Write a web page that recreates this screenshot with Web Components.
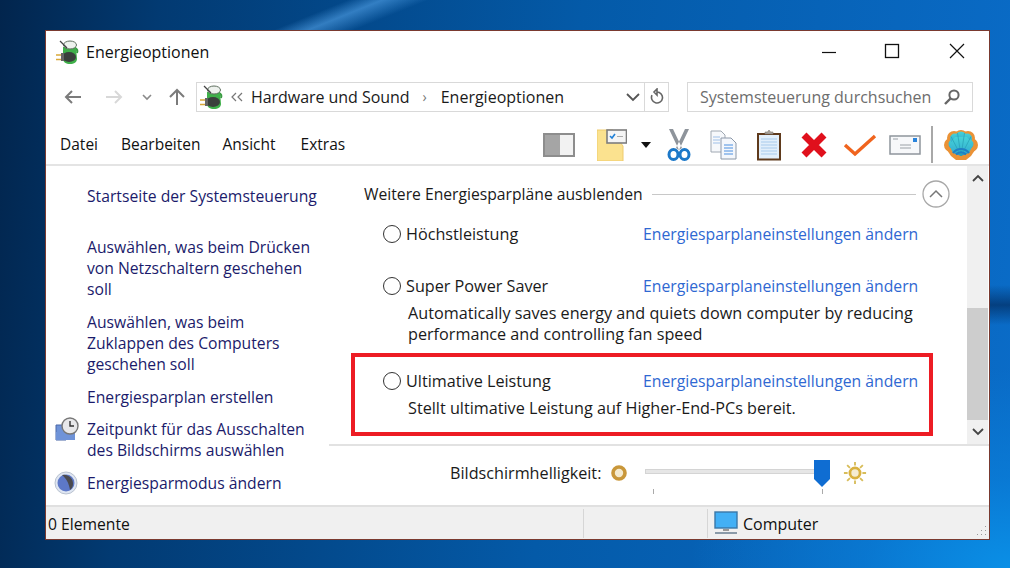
<!DOCTYPE html>
<html><head><meta charset="utf-8"><style>
html,body{margin:0;padding:0;height:568px;overflow:hidden}
body{width:1010px;height:568px;font-family:"Open Sans","Noto Sans",sans-serif;background:
linear-gradient(158deg,transparent 0 30%,rgba(90,170,240,.55) 33%,transparent 37%) no-repeat 0 0/1010px 60px,
linear-gradient(to bottom,transparent 0,rgba(2,40,90,.65) 50%,transparent 100%) no-repeat 990px 285px/20px 40px,
radial-gradient(ellipse 320px 200px at 1010px 568px,#0a8fe6 0,rgba(10,130,220,.6) 45%,transparent 100%),
linear-gradient(95deg,#02254d 0,#023a72 15%,#045aa8 55%,#0a6cc8 100%);}
win-dow{margin:30px 20px 0 45px}
</style></head><body>
<win-dow>
<title-bar></title-bar>
<nav-bar></nav-bar>
<menu-bar></menu-bar>
<main-area></main-area>
<status-bar></status-bar>
</win-dow>
<script>
const plug=(s)=>`<svg width="${s}" height="${s}" viewBox="0 0 24 24"><path d="M19 8a4 4 0 0 1 2 5" fill="none" stroke="#3a9a42" stroke-width="2"/><path d="M7 7h13l1 12c0 3-3 5-7 5s-7-2-7-5z" fill="#3fb04a"/><ellipse cx="14" cy="5" rx="6.500" ry="4" fill="#eef2ee" stroke="#5f6f5f"/><path d="M4 1l7 7" stroke="#444" stroke-width="1.300"/><ellipse cx="13" cy="17" rx="7" ry="5" fill="#3a403c"/><path d="M0 15h6M0 19.500h6" stroke="#d9a93a" stroke-width="1.700"/><rect x="5" y="13" width="3" height="8" fill="#666"/></svg>`;
function def(name,html){customElements.define(name,class extends HTMLElement{constructor(){super();this.attachShadow({mode:'open'}).innerHTML=html}})}
def('win-dow',`<style>:host{display:flex;flex-direction:column;width:945px;height:510px;background:#fff;box-sizing:border-box;border:1px solid #7a3a30;color:#111;font-size:16px;position:relative}</style><slot></slot>`);
def('title-bar',`<style>:host{display:flex;align-items:center;height:42px;flex:none;padding-left:10px;font-size:16px;position:relative}
span{margin-left:6px;flex:1}
.w{display:flex;align-items:center;margin-right:24px;margin-top:-2px}
.w svg{display:block}</style>
${plug(24)}<span>Energieoptionen</span>
<div class="w">
<svg width="14" height="16" viewBox="0 0 14 16"><path d="M0 9.500h14" stroke="#111" stroke-width="1.200"/></svg>
<svg style="margin-left:48px" width="16" height="16" viewBox="0 0 16 16"><rect x="1.500" y="1.500" width="13" height="13" fill="none" stroke="#111" stroke-width="1.300"/></svg>
<svg style="margin-left:49px" width="16" height="16" viewBox="0 0 16 16"><path d="M1 1l14 14M15 1L1 15" stroke="#111" stroke-width="1.200"/></svg>
</div>`);
def('nav-bar',`<style>:host{display:flex;align-items:center;height:35px;margin-top:6px;flex:none;padding-left:17px}
svg{display:block;flex:none}
.box{display:flex;align-items:center;box-sizing:border-box;height:30px;width:473px;margin-left:9px;border:1px solid #d9d9d9;padding-left:3px;font-size:16px;color:#1a1a1a}
.a{color:#777;font-size:14px;margin:0 14px 0 13px}
.sp{flex:1}
.v{border-left:1px solid #d9d9d9;height:28px;width:23px;display:flex;align-items:center;justify-content:center;flex:none}
.s{display:flex;align-items:center;box-sizing:border-box;width:286px;height:30px;margin-left:18px;border:1px solid #d9d9d9;padding-left:12px;color:#6d6d6d;font-size:16px}
.s span{flex:1;white-space:nowrap}.s svg{margin-right:11px}</style>
<svg width="20" height="18" viewBox="0 0 20 18"><path d="M18 9H3M9 3L3 9l6 6" fill="none" stroke="#7b7b7b" stroke-width="2"/></svg>
<svg style="margin-left:21px" width="20" height="18" viewBox="0 0 20 18"><path d="M2 9h15M11 3l6 6-6 6" fill="none" stroke="#d8d8d8" stroke-width="2"/></svg>
<svg style="margin-left:18px" width="10" height="18" viewBox="0 0 10 18"><path d="M1 7l4 4 4-4" fill="none" stroke="#8a8a8a" stroke-width="1.600"/></svg>
<svg style="margin-left:15px" width="20" height="20" viewBox="0 0 20 20"><path d="M10 18V3M3 10l7-7 7 7" fill="none" stroke="#7b7b7b" stroke-width="2"/></svg>
<div class="box">${plug(24)}
<svg style="margin-left:7px" width="12" height="10" viewBox="0 0 12 10"><path d="M5 1L1 5l4 4M11 1L7 5l4 4" fill="none" stroke="#777" stroke-width="1.200"/></svg><span style="margin-left:8px;letter-spacing:-.05px">Hardware und Sound</span><span class="a">›</span><span>Energieoptionen</span><span class="sp"></span>
<svg style="margin-right:3px" width="16" height="16" viewBox="0 0 16 16"><path d="M2 5l6 6 6-6" fill="none" stroke="#555" stroke-width="1.800"/></svg>
<div class="v"><svg width="18" height="18" viewBox="0 0 18 18"><path d="M9 4a5.500 5.500 0 1 1-5 3.200M9 1v6L6 4z" fill="none" stroke="#666" stroke-width="1.600"/></svg></div></div>
<div class="s"><span>Systemsteuerung durchsuchen</span><svg width="18" height="18" viewBox="0 0 18 18"><circle cx="11" cy="7" r="4.600" fill="none" stroke="#666" stroke-width="2"/><path d="M7.500 10.500L2 16" stroke="#666" stroke-width="2.400"/></svg></div>`);
def('menu-bar',`<style>:host{display:flex;align-items:center;height:52px;flex:none;padding:11px 11px 0 14px;border-bottom:2px solid #e4e4e4;box-sizing:border-box;font-size:15.500px;position:relative}
span{margin-right:23px;margin-top:-2px}
i{flex:1}svg{display:block;flex:none}</style>
<span>Datei</span><span style="margin-right:22px">Bearbeiten</span><span style="margin-right:25px">Ansicht</span><span>Extras</span><i></i>
<svg width="32" height="24" viewBox="0 0 32 24"><rect x="1" y="1" width="30" height="22" fill="#f2f2f2" stroke="#8d8d8d" stroke-width="2"/><rect x="2" y="2" width="15" height="20" fill="#a5a5a5"/></svg>
<svg style="margin-left:22px" width="30" height="32" viewBox="0 0 30 32"><path d="M0 1h16v12h7l3 4v15H0z" fill="#fbe28f" stroke="#eecb6c"/><rect x="10" y="1" width="19.500" height="13" fill="#f4f4f4" stroke="#7d7d7d" stroke-width="1.600"/><path d="M13 7l2 2 3-4" stroke="#1f7fd6" stroke-width="1.600" fill="none"/><path d="M20 7.500h6" stroke="#aaa"/></svg>
<svg style="margin-left:13px" width="12" height="8" viewBox="0 0 12 8"><path d="M1 1h10L6 7z" fill="#111"/></svg>
<svg style="margin-left:15px" width="24" height="32" viewBox="0 0 24 32"><path d="M2 0l4 0 9 19-3 2zM22 0l-4 0-9 19 3 2z" fill="#8e949b"/><ellipse cx="6.500" cy="25.500" rx="4.500" ry="5" fill="none" stroke="#1c78c8" stroke-width="3"/><ellipse cx="17.500" cy="25.500" rx="4.500" ry="5" fill="none" stroke="#1c78c8" stroke-width="3"/></svg>
<svg style="margin-left:19px" width="27" height="30" viewBox="0 0 27 30"><path d="M1 1h10l4 4v17H1z" fill="#f6f8fb" stroke="#a0a8b2"/><path d="M11 8h10l5 5v16H11z" fill="#f4f7fc" stroke="#8c98a8"/><path d="M14 15h9M14 18h9M14 21h9M14 24h9" stroke="#4a8fe0"/><path d="M3 7h7M3 10h7M3 13h7" stroke="#9fc0e8"/></svg>
<svg style="margin-left:19px" width="26" height="32" viewBox="0 0 26 32"><rect x="1" y="4" width="24" height="27.500" fill="#5f3a1c"/><rect x="3" y="6" width="20" height="23.500" fill="#e2effb"/><path d="M5 10h16M5 13h16M5 16h16M5 19h16M5 22h16M5 25h16" stroke="#a9cbec"/><path d="M9 5V3h2.500L13 1l1.500 2H17v2z" fill="#a8a29a" stroke="#807a70" stroke-width=".6"/></svg>
<svg style="margin-left:18px" width="28" height="28" viewBox="0 0 28 28"><path d="M4 4l20 20M24 4L4 24" stroke="#e0101c" stroke-width="7"/></svg>
<svg style="margin-left:15px" width="34" height="24" viewBox="0 0 34 24"><path d="M2 12l10 9L32 3" fill="none" stroke="#f0641e" stroke-width="3.400"/></svg>
<svg style="margin-left:12px" width="32" height="20" viewBox="0 0 32 20"><rect x="1" y="1" width="30" height="18" fill="#f7f8fa" stroke="#8f959c" stroke-width="1.500"/><rect x="24" y="3" width="4" height="4" fill="#2a84dc"/><path d="M4 4h5M11 10h11M11 13h11" stroke="#9aa0a6"/></svg>
<div style="width:2px;height:37px;background:#a8a8a8;margin:0 11px 0 10px;flex:none"></div>
<svg width="34" height="32" viewBox="0 0 34 32"><defs><linearGradient id="sh" x1="0" y1="0" x2="0" y2="1"><stop offset="0" stop-color="#46d2d8"/><stop offset=".7" stop-color="#36b4d2"/><stop offset="1" stop-color="#2090c8"/></linearGradient></defs>
<g fill="#ea9236"><circle cx="7" cy="16" r="7"/><circle cx="10" cy="9" r="7"/><circle cx="17" cy="8" r="7"/><circle cx="24" cy="9" r="7"/><circle cx="27" cy="16" r="7"/><path d="M1 18l6 9 5 4h10l5-4 6-9z"/></g>
<g fill="url(#sh)"><circle cx="9" cy="15" r="4.500"/><circle cx="11" cy="9.500" r="5"/><circle cx="17" cy="8" r="5.500"/><circle cx="23" cy="9.500" r="5"/><circle cx="25" cy="15" r="4.500"/><path d="M5 16l6-8h12l6 8-4 8-8 3-8-3z"/></g>
<path d="M17 27L13.500 4M17 27L20.500 4M17 27L7 7.500M17 27L27 7.500" stroke="#2aa3b8" stroke-width=".8"/>
<path d="M9 24a10 10 0 0 1 16 0M12 25.500a6.500 6.500 0 0 1 10 0" fill="none" stroke="#1f7fc4" stroke-width="2"/></svg>`);
def('side-panel',`<style>:host{display:block;width:283px;flex:none;box-sizing:border-box;padding:20px 0 0 41px;color:#1b1b6b;font-size:15.700px;line-height:21px}
p{margin:0;position:relative;white-space:nowrap}
svg{position:absolute;left:-33px}</style>
<p>Startseite der Systemsteuerung</p>
<p style="margin-top:30px">Auswählen, was beim Drücken<br>von Netzschaltern geschehen<br>soll</p>
<p style="margin-top:12px">Auswählen, was beim<br>Zuklappen des Computers<br>geschehen soll</p>
<p style="margin-top:12px">Energiesparplan erstellen</p>
<p style="margin-top:11px"><svg style="top:-2px" width="26" height="26" viewBox="0 0 26 26"><path d="M2 8h10v15H2z" fill="#6f93d8" stroke="#4a68a8"/><rect x="2" y="15" width="19" height="8" fill="#6f93d8"/><circle cx="16" cy="9" r="8" fill="#e8e8ea" stroke="#777" stroke-width="1.400"/><path d="M16 4v5h4" fill="none" stroke="#333" stroke-width="1.400"/></svg>Zeitpunkt für das Ausschalten<br>des Bildschirms auswählen</p>
<p style="margin-top:12px"><svg style="top:-2px" width="24" height="24" viewBox="0 0 24 24"><circle cx="12" cy="12" r="11" fill="#dfe6f2" stroke="#b9c2cf"/><circle cx="12" cy="12" r="8.500" fill="#5d78c8"/><path d="M8 4a9 9 0 0 1 11 8 8 8 0 0 1-3 7C15 12 12 7 8 4z" fill="#4a4a50"/></svg>Energiesparmodus ändern</p>`);
def('plan-row',`<style>:host{display:block;font-size:16.200px;color:#1a1a1a;line-height:21px}
.r{display:flex;align-items:center;height:22px}
.c{box-sizing:border-box;width:18px;height:18px;border:1.500px solid #333;border-radius:50%;margin-left:54px;flex:none}
.n{margin-left:5px;width:237px;flex:none;white-space:nowrap}
.l{color:#2f68d2;white-space:nowrap;font-size:15.750px}
.d{margin:6px 0 0 79px;white-space:nowrap;font-size:16.200px}
</style><div class="r"><div class="c"></div><div class="n"><slot name="n"></slot></div><div class="l">Energiesparplaneinstellungen ändern</div></div><div class="d"><slot></slot></div>`);
def('main-area',`<style>:host{flex:1;display:flex;min-height:0;position:relative}
.m{flex:1;display:flex;flex-direction:column;min-width:0}
.top{flex:none;display:flex;border-bottom:2px solid #e2e2e2;box-sizing:border-box;height:280px}
.c{flex:1;padding-top:17px;font-size:15.700px;color:#1a1a1a;min-width:0;box-sizing:border-box}
.h{display:flex;align-items:center;height:22px;padding-left:35px}
.h span{white-space:nowrap}.h i{flex:1;height:1px;background:#c8c8c8;margin:0 6px 0 9px}
.h svg{margin-right:17px;display:block;flex:none}
.sb{width:21px;flex:none;background:#f0f0f0;display:flex;flex-direction:column;margin-right:1px}
.sb .tr{flex:1;display:flex;flex-direction:column;justify-content:flex-end}
.sb .th{height:112px;background:#cdcdcd}
.sb .ar{height:24px;display:flex;align-items:center;justify-content:center;flex:none}
.b{flex:1;display:flex;align-items:center;font-size:16.200px;padding:0 0 6px 121px;color:#1a1a1a;box-sizing:border-box}
.red{position:absolute;left:305px;top:187px;width:582px;height:83px;box-sizing:border-box;border:4px solid #ed1c24}
.slider{position:relative;width:185px;height:40px;margin-left:17px;flex:none}
.slider .t{position:absolute;left:0;top:16px;width:180px;height:5px;background:#e6e6e6;border:1px solid #d4d4d4;box-sizing:border-box}
.slider svg{position:absolute;left:169px;top:7px;display:block}
.slider .k{position:absolute;top:36px;width:1px;height:5px;background:#aaa}
.ic{display:block;flex:none}
</style>
<side-panel></side-panel>
<div class="m"><div class="top"><div class="c">
<div class="h"><span>Weitere Energiesparpläne ausblenden</span><i></i><svg width="28" height="28" viewBox="0 0 28 28"><circle cx="14" cy="14" r="13" fill="#fff" stroke="#a8a8a8" stroke-width="1.300"/><path d="M8 17l6-6 6 6" fill="none" stroke="#777" stroke-width="1.500"/></svg></div>
<plan-row style="margin-top:18px"><span slot="n">Höchstleistung</span></plan-row>
<plan-row style="margin-top:30px"><span slot="n">Super Power Saver</span>Automatically saves energy and quiets down computer by reducing<br>performance and controlling fan speed</plan-row>
<plan-row style="margin-top:25px"><span slot="n">Ultimative Leistung</span>Stellt ultimative Leistung auf Higher-End-PCs bereit.</plan-row>
</div>
<div class="sb"><div class="ar"><svg width="12" height="8" viewBox="0 0 12 8"><path d="M1 7l5-5 5 5" fill="none" stroke="#444" stroke-width="1.800"/></svg></div><div class="tr"><div class="th"></div></div><div class="ar"><svg width="12" height="8" viewBox="0 0 12 8"><path d="M1 1l5 5 5-5" fill="none" stroke="#444" stroke-width="1.800"/></svg></div></div>
</div>
<div class="b"><span>Bildschirmhelligkeit:</span>
<svg class="ic" style="margin-left:9px" width="18" height="18" viewBox="0 0 18 18"><circle cx="9" cy="9" r="6" fill="#f4ead0" stroke="#c9973a" stroke-width="3.600"/></svg>
<div class="slider"><div class="t"></div><div class="k" style="left:8px"></div><div class="k" style="left:177px"></div>
<svg width="16" height="27" viewBox="0 0 16 27"><path d="M0 0h16v19l-8 8-8-8z" fill="#0f6dd2"/></svg></div>
<svg class="ic" style="margin-left:13px" width="24" height="24" viewBox="0 0 26 26"><circle cx="13" cy="13" r="5.500" fill="#f5ecd2" stroke="#d9b13f" stroke-width="3"/><path d="M13 1v4M13 21v4M1 13h4M21 13h4M4.500 4.500l3 3M18.500 18.500l3 3M21.500 4.500l-3 3M7.500 18.500l-3 3" stroke="#d8bd5a" stroke-width="2"/></svg>
</div></div>
<div class="red"></div>`);
def('status-bar',`<style>:host{display:flex;align-items:center;height:34px;flex:none;box-sizing:border-box;background:#f0f0f0;border-top:2px solid #e0e0e0;font-size:15.700px;color:#111;position:relative}
.a{width:537px;padding:1px 0 0 2px;box-sizing:border-box;flex:none}
.b{width:123px;height:29px;border-left:1px solid #d6d6d6;flex:none}
.c{display:flex;align-items:center;height:29px;border-left:1px solid #d6d6d6;padding-left:6px;flex:1;font-size:16px}
.c span{margin-left:5px;padding-top:1px}
svg{display:block}
.g{position:absolute;right:2px;bottom:2px}</style>
<div class="a">0 Elemente</div><div class="b"></div><div class="c"><svg width="24" height="24" viewBox="0 0 24 24"><rect x="1" y="1" width="22" height="16" fill="#43b0f5" stroke="#3a78a8" stroke-width="1.400"/><path d="M9 18h6v2H9z" fill="#999"/><path d="M1 22h22" stroke="#8a9aa8" stroke-width="2"/></svg><span>Computer</span></div>
<svg class="g" width="12" height="12" viewBox="0 0 12 12"><path d="M10 1h1v1h-1zM10 5h1v1h-1zM6 5h1v1H6zM10 9h1v1h-1zM6 9h1v1H6zM2 9h1v1H2z" fill="#999"/></svg>`);
</script></body></html>
